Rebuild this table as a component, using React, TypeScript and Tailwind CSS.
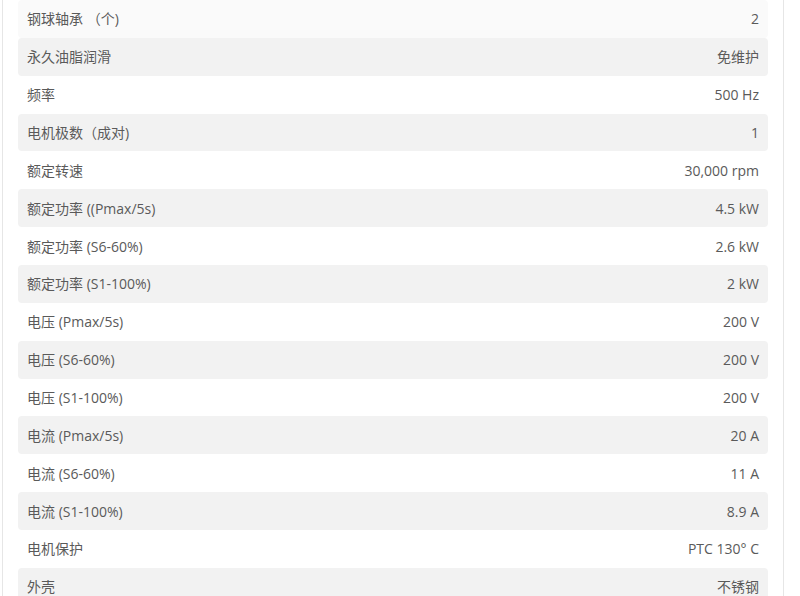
import React from "react";

const rows: [string, string][] = [
  ["钢球轴承 （个)", "2"],
  ["永久油脂润滑", "免维护"],
  ["频率", "500 Hz"],
  ["电机极数（成对)", "1"],
  ["额定转速", "30,000 rpm"],
  ["额定功率 ((Pmax/5s)", "4.5 kW"],
  ["额定功率 (S6-60%)", "2.6 kW"],
  ["额定功率 (S1-100%)", "2 kW"],
  ["电压 (Pmax/5s)", "200 V"],
  ["电压 (S6-60%)", "200 V"],
  ["电压 (S1-100%)", "200 V"],
  ["电流 (Pmax/5s)", "20 A"],
  ["电流 (S6-60%)", "11 A"],
  ["电流 (S1-100%)", "8.9 A"],
  ["电机保护", "PTC 130° C"],
  ["外壳", "不锈钢"],
];

export default function App() {
  return (
    <div className="w-[800px] h-[596px] overflow-hidden bg-white">
      <div
        className="ml-[2px] w-[782px] h-[596px] border-l border-r border-[#e6e6e6] pl-[15px] pr-[15px]"
        style={{ fontFamily: '"Open Sans", "Noto Sans CJK SC", sans-serif' }}
      >
        <div>
          {rows.map(([k, v], i) => (
            <div
              key={i}
              className={
                "flex h-[37.87px] items-center justify-between rounded-[4px] px-[9px] text-[14px] text-[#5a5a5a] " +
                (i === 0 ? "bg-[#fafafa]" : i % 2 === 1 ? "bg-[#f2f2f2]" : "bg-white")
              }
            >
              <span>{k}</span>
              <span>{v}</span>
            </div>
          ))}
        </div>
      </div>
    </div>
  );
}
